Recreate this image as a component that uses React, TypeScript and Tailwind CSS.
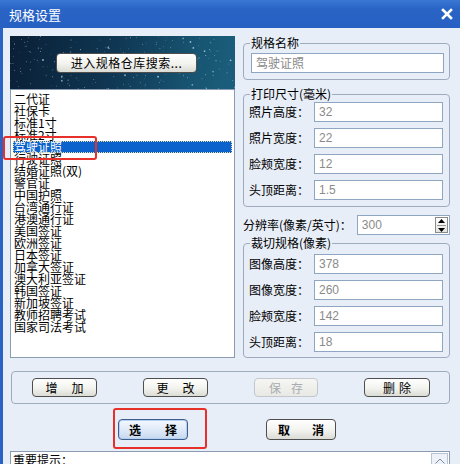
import React from "react";

const items = [
  "二代证", "社保卡", "标准1寸", "标准2寸", "驾驶证照", "行驶证照", "结婚证照(双)", "警官证",
  "中国护照", "台湾通行证", "港澳通行证", "美国签证", "欧洲签证", "日本签证", "加拿大签证",
  "澳大利亚签证", "韩国签证", "新加坡签证", "教师招聘考试", "国家司法考试",
];

function Stars() {
  let s = 987654;
  const rnd = () => {
    s = (s * 1103515245 + 12345) % 2147483648;
    return s / 2147483648;
  };
  const dots: { x: number; y: number; r: number; o: number }[] = [];
  for (let i = 0; i < 220; i++) {
    dots.push({ x: rnd() * 225, y: rnd() * 53, r: rnd() < 0.08 ? 0.9 : 0.45, o: 0.25 + rnd() * 0.75 });
  }
  return (
    <svg width="225" height="53" className="absolute left-0 top-0">
      {dots.map((d, i) => (
        <circle key={i} cx={d.x} cy={d.y} r={d.r} fill="#cfe8ff" opacity={d.o} />
      ))}
    </svg>
  );
}

function Btn({
  children,
  className = "",
  disabled = false,
  primary = false,
}: {
  children: React.ReactNode;
  className?: string;
  disabled?: boolean;
  primary?: boolean;
}) {
  const base = disabled
    ? "border-[#c4c8cc] text-[#a8acb0] bg-[linear-gradient(#f6f6f4,#e8e8e4)]"
    : primary
    ? "border-[#3d5f8f] text-black bg-[linear-gradient(#f4f8fe,#dbe7f6_60%,#c6d8ef)] shadow-[inset_0_0_0_1px_#b8d0f0]"
    : "border-[#4e4e4e] text-black bg-[linear-gradient(#ffffff,#f2f2ee_55%,#dcdcd6)]";
  return (
    <div
      className={`flex items-center justify-center rounded-[4px] border text-[12px] leading-none font-['Noto_Sans_CJK_SC',sans-serif] ${base} ${className}`}
    >
      {children}
    </div>
  );
}

function Field({ label, value }: { label: string; value: string }) {
  return (
    <div className="flex items-center h-[20px]">
      <div className="w-[65px] text-[12px] leading-none text-black font-['Noto_Sans_CJK_SC',sans-serif]">
        {label}
      </div>
      <div className="flex-1 h-[20px] bg-white border border-[#8ea6c2] flex items-center pl-[4px] text-[12px] text-[#8a8a8a] font-['Liberation_Sans','Noto_Sans_CJK_SC',sans-serif]">
        {value}
      </div>
    </div>
  );
}

export default function App() {
  return (
    <div className="relative w-[460px] h-[464px] overflow-hidden bg-[#2a63c4] flex flex-col font-['Noto_Sans_CJK_SC',sans-serif]">
      {/* title bar */}
      <div className="h-[28px] shrink-0 flex items-center justify-between pl-[9px] pr-[7px] bg-[linear-gradient(#3a78d4,#2a65c6_30%,#2560c2)]">
        <span className="text-white text-[13px] leading-none">规格设置</span>
        <svg width="12" height="12" viewBox="0 0 12 12">
          <path d="M2 2 L10 10 M10 2 L2 10" stroke="white" strokeWidth="2.6" strokeLinecap="square" />
        </svg>
      </div>

      {/* body */}
      <div className="flex-1 ml-[3px] bg-[#e8eef8] flex flex-col pl-[7px] pr-[10px] pt-[8px]">
        <div className="flex gap-[8px]">
          {/* left column */}
          <div className="w-[225px] flex flex-col">
            <div className="relative h-[53px] overflow-hidden bg-[linear-gradient(100deg,#0a1f36,#0f3652_45%,#175471_80%,#1b5f7c)]">
              <Stars />
              <div className="relative pl-[46px] pt-[17px]">
                <Btn className="w-[141px] h-[20px] tracking-[0.5px]">进入规格仓库搜索...</Btn>
              </div>
            </div>
            <div className="h-[269px] bg-white border border-[#8a9bb2] pt-[3px] px-[2px]">
              {items.map((it, i) => (
                <div
                  key={it}
                  className={`h-[12px] leading-[12px] text-[12px] pl-[1px] whitespace-nowrap ${
                    i === 4
                      ? "bg-[#0b62cc] text-white outline-1 outline-dotted outline-[#e8d9a0] -outline-offset-1"
                      : "text-black"
                  }`}
                >
                  {it}
                </div>
              ))}
            </div>
          </div>

          {/* right column */}
          <div className="w-[207px] flex flex-col">
            <fieldset className="border border-[#9eabbe] rounded-[4px] pl-[7px] pr-[5px] pt-[3px] pb-[6px]">
              <legend className="px-[1px] -ml-[1px] text-[12px] leading-[14px] text-black">规格名称</legend>
              <div className="h-[20px] bg-white border border-[#8ea6c2] flex items-center pl-[4px] text-[12px] text-[#8a8a8a]">
                驾驶证照
              </div>
            </fieldset>

            <fieldset className="mt-[7px] border border-[#9eabbe] rounded-[4px] pl-[5px] pr-[6px] pt-[1px] pb-[6px] flex flex-col gap-[6px]">
              <legend className="px-[1px] ml-[1px] text-[12px] leading-[14px] text-black">打印尺寸(毫米)</legend>
              <Field label="照片高度：" value="32" />
              <Field label="照片宽度：" value="22" />
              <Field label="脸颊宽度：" value="12" />
              <Field label="头顶距离：" value="1.5" />
            </fieldset>

            <div className="mt-[8px] flex items-center h-[20px]">
              <span className="w-[115px] text-[12px] leading-none text-black whitespace-nowrap">分辨率(像素/英寸)：</span>
              <div className="w-[94px] h-[20px] bg-white border border-[#8ea6c2] flex items-center justify-between pl-[4px] pr-[1px]">
                <span className="text-[12px] text-[#8a8a8a] font-['Liberation_Sans',sans-serif]">300</span>
                <div className="w-[13px] h-[16px] border border-[#8a8a8a] bg-[linear-gradient(#ffffff,#e4e4e0)] flex flex-col items-center justify-center gap-[2px]">
                  <svg width="7" height="4" viewBox="0 0 7 4"><path d="M0 4 L3.5 0 L7 4 Z" fill="#000" /></svg>
                  <div className="w-[9px] h-px bg-[#9a9a9a]" />
                  <svg width="7" height="4" viewBox="0 0 7 4"><path d="M0 0 L3.5 4 L7 0 Z" fill="#000" /></svg>
                </div>
              </div>
            </div>

            <fieldset className="mt-[1px] border border-[#9eabbe] rounded-[4px] pl-[5px] pr-[6px] pt-[4px] pb-[5px] flex flex-col gap-[6px]">
              <legend className="px-[1px] ml-[1px] text-[12px] leading-[14px] text-black">裁切规格(像素)</legend>
              <Field label="图像高度：" value="378" />
              <Field label="图像宽度：" value="260" />
              <Field label="脸颊宽度：" value="142" />
              <Field label="头顶距离：" value="18" />
            </fieldset>
          </div>
        </div>

        {/* edit buttons group */}
        <div className="mt-[13px] h-[33px] ml-[1px] border border-[#9eabbe] rounded-[4px] flex items-center pl-[20px] gap-[46px]">
          <Btn className="w-[65px] h-[19px]">
            <span>增</span>
            <span className="ml-[14px]">加</span>
          </Btn>
          <Btn className="w-[65px] h-[19px]">
            <span>更</span>
            <span className="ml-[14px]">改</span>
          </Btn>
          <Btn className="w-[64px] h-[19px]" disabled>
            <span>保</span>
            <span className="ml-[10px]">存</span>
          </Btn>
          <Btn className="w-[66px] h-[19px]">
            <span>删</span>
            <span className="ml-[4px]">除</span>
          </Btn>
        </div>

        {/* dialog buttons */}
        <div className="mt-[15px] flex pl-[108px] gap-[78px]">
          <Btn className="w-[70px] h-[21px] font-bold" primary>
            <span>选</span>
            <span className="ml-[24px]">择</span>
          </Btn>
          <Btn className="w-[70px] h-[21px] font-bold">
            <span>取</span>
            <span className="ml-[22px]">消</span>
          </Btn>
        </div>

        {/* notes area */}
        <div className="mt-[11px] h-[40px] bg-white border border-[#8a9bb2] flex justify-between">
          <span className="pl-[2px] pt-[2px] text-[12px] leading-[12px] text-black">重要提示：</span>
          <div className="w-[17px] h-[16px] mt-[1px] mr-[1px] border border-[#b8c4d4] bg-[#eef2f8] flex items-center justify-center">
            <svg width="10" height="6" viewBox="0 0 10 6"><path d="M0.5 5.5 L5 1 L9.5 5.5" fill="none" stroke="#7a8aa0" strokeWidth="1" /></svg>
          </div>
        </div>
      </div>

      {/* red annotation boxes */}
      <div className="absolute left-[3px] top-[136px] w-[94px] h-[24px] border-[2.5px] border-[#e8302a] rounded-[3px]" />
      <div className="absolute left-[113px] top-[408px] w-[94px] h-[41px] border-[2.5px] border-[#e8302a] rounded-[3px]" />
    </div>
  );
}
